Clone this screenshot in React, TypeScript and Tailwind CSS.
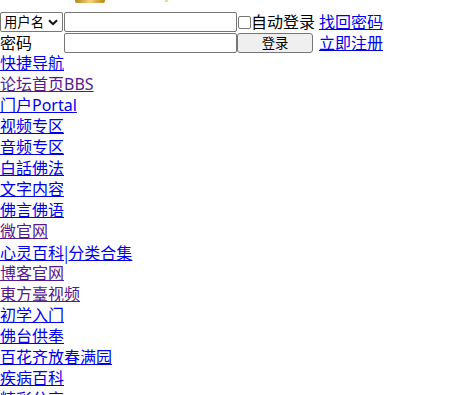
import React from "react";

const FONT = { fontFamily: '"Noto Sans", "Noto Sans CJK SC", sans-serif' };

type Item = { parts: { text: string; visited?: boolean; plain?: boolean }[] };

const items: Item[] = [
  { parts: [{ text: "快捷导航" }] },
  { parts: [{ text: "论坛首页BBS", visited: true }] },
  { parts: [{ text: "门户Portal" }] },
  { parts: [{ text: "视频专区" }] },
  { parts: [{ text: "音频专区" }] },
  { parts: [{ text: "白話佛法" }] },
  { parts: [{ text: "文字内容" }] },
  { parts: [{ text: "佛言佛语" }] },
  { parts: [{ text: "微官网", visited: true }] },
  { parts: [{ text: "心灵百科" }, { text: "|", plain: true }, { text: "分类合集" }] },
  { parts: [{ text: "博客官网", visited: true }] },
  { parts: [{ text: "東方臺视频", visited: true }] },
  { parts: [{ text: "初学入门" }] },
  { parts: [{ text: "佛台供奉" }] },
  { parts: [{ text: "百花齐放春满园" }] },
  { parts: [{ text: "疾病百科" }] },
  { parts: [{ text: "精彩分享" }] },
];

export default function App() {
  return (
    <div className="bg-white text-black text-[16px] w-[460px] h-[395px] overflow-hidden" style={FONT}>
      {/* top logo fragment */}
      <div className="flex h-[12px] items-start">
        <div className="ml-[75px] w-[30px] h-[3px] rounded-b-[2px] bg-gradient-to-r from-[#b8860b] via-[#f3d27a] to-[#b8860b]" />
        <div className="ml-[60px] w-[3px] h-[2px] bg-[#e9d9a0]" />
      </div>

      {/* login form */}
      <div className="grid grid-cols-[64px_173px_82px_auto] grid-rows-[20px_21px] items-center leading-[20px]">
        <div className="h-[20px]">
          <div className="w-[63px] h-[20px] border border-[#767676] rounded-[2px] flex items-center justify-between pl-[3px] pr-[4px] text-[13.33px] bg-white">
            <span>用户名</span>
            <svg width="10" height="7" viewBox="0 0 10 7">
              <path d="M1 1.2 L5 5.2 L9 1.2" fill="none" stroke="#111" strokeWidth="2" />
            </svg>
          </div>
        </div>
        <div className="h-[20px]">
          <div className="w-[173px] h-[20px] border border-[#767676] rounded-[2px] bg-white" />
        </div>
        <div className="flex items-center h-[20px] whitespace-nowrap">
          <span className="ml-[1px] w-[13px] h-[13px] shrink-0 border border-[#767676] rounded-[2px] bg-white" />
          <span>自动登录</span>
        </div>
        <div className="h-[20px] flex items-center">
          <a href="#" className="text-[#0000ee] underline">找回密码</a>
        </div>

        <div className="h-[21px] flex items-center">密码</div>
        <div className="h-[21px] flex items-end">
          <div className="w-[173px] h-[20px] border border-[#767676] rounded-[2px] bg-white" />
        </div>
        <div className="h-[21px] flex items-end">
          <div className="w-[76px] h-[20px] border border-[#767676] rounded-[3px] bg-[#efefef] flex items-center justify-center text-[13.33px]">
            登录
          </div>
        </div>
        <div className="h-[21px] flex items-center">
          <a href="#" className="text-[#0000ee] underline">立即注册</a>
        </div>
      </div>

      {/* nav list */}
      <div className="leading-[21px]">
        {items.map((it, i) => (
          <div key={i} className="h-[21px] whitespace-nowrap">
            {it.parts.map((p, j) =>
              p.plain ? (
                <span
                  key={j}
                  className="text-[#0000ee]"
                  style={{ fontFamily: '"Noto Sans CJK SC", sans-serif' }}
                >
                  {p.text}
                </span>
              ) : (
                <a
                  key={j}
                  href="#"
                  className={p.visited ? "text-[#551a8b] underline" : "text-[#0000ee] underline"}
                >
                  {p.text}
                </a>
              )
            )}
          </div>
        ))}
      </div>
    </div>
  );
}
